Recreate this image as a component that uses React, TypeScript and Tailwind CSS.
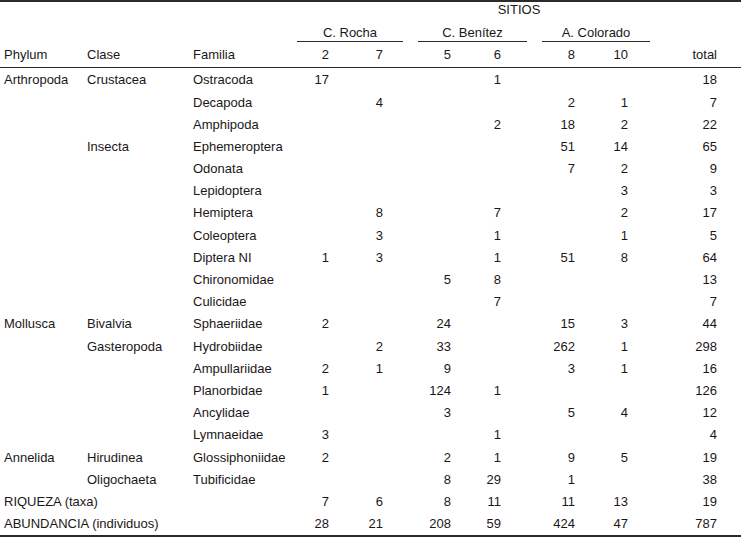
const COLS = "grid grid-cols-[83px_106px_96px_40px_54px_68px_50px_74px_53px_89px] pl-[4px]";

type Row = {
  phylum?: string;
  clase?: string;
  familia?: string;
  label?: string;
  v: (number | null)[];
  total: number;
};

const _ = null;

const ROWS: Row[] = [
  { phylum: "Arthropoda", clase: "Crustacea", familia: "Ostracoda", v: [17, _, _, 1, _, _], total: 18 },
  { familia: "Decapoda", v: [_, 4, _, _, 2, 1], total: 7 },
  { familia: "Amphipoda", v: [_, _, _, 2, 18, 2], total: 22 },
  { clase: "Insecta", familia: "Ephemeroptera", v: [_, _, _, _, 51, 14], total: 65 },
  { familia: "Odonata", v: [_, _, _, _, 7, 2], total: 9 },
  { familia: "Lepidoptera", v: [_, _, _, _, _, 3], total: 3 },
  { familia: "Hemiptera", v: [_, 8, _, 7, _, 2], total: 17 },
  { familia: "Coleoptera", v: [_, 3, _, 1, _, 1], total: 5 },
  { familia: "Diptera NI", v: [1, 3, _, 1, 51, 8], total: 64 },
  { familia: "Chironomidae", v: [_, _, 5, 8, _, _], total: 13 },
  { familia: "Culicidae", v: [_, _, _, 7, _, _], total: 7 },
  { phylum: "Mollusca", clase: "Bivalvia", familia: "Sphaeriidae", v: [2, _, 24, _, 15, 3], total: 44 },
  { clase: "Gasteropoda", familia: "Hydrobiidae", v: [_, 2, 33, _, 262, 1], total: 298 },
  { familia: "Ampullariidae", v: [2, 1, 9, _, 3, 1], total: 16 },
  { familia: "Planorbidae", v: [1, _, 124, 1, _, _], total: 126 },
  { familia: "Ancylidae", v: [_, _, 3, _, 5, 4], total: 12 },
  { familia: "Lymnaeidae", v: [3, _, _, 1, _, _], total: 4 },
  { phylum: "Annelida", clase: "Hirudinea", familia: "Glossiphoniidae", v: [2, _, 2, 1, 9, 5], total: 19 },
  { clase: "Oligochaeta", familia: "Tubificidae", v: [_, _, 8, 29, 1, _], total: 38 },
  { label: "RIQUEZA (taxa)", v: [7, 6, 8, 11, 11, 13], total: 19 },
  { label: "ABUNDANCIA (individuos)", v: [28, 21, 208, 59, 424, 47], total: 787 },
];

export default function App() {
  return (
    <div className="w-[741px] h-[540px] bg-white text-[#1a1718] text-[13px] font-['Liberation_Sans',Arial,sans-serif]">
      <div className="border-t-2 border-[#2b2b2b]">
        {/* SITIOS */}
        <div className="flex h-[15px] pl-[297px]">
          <div className="flex-1 text-center leading-[15px]">SITIOS</div>
        </div>

        {/* site groups */}
        <div className="flex h-[25px] pl-[297px] gap-[15px]">
          {[
            ["C. Rocha", "w-[106px]"],
            ["C. Benítez", "w-[109px]"],
            ["A. Colorado", "w-[108px]"],
          ].map(([name, w]) => (
            <div key={name} className={`${w} flex items-end justify-center border-b border-[#2b2b2b]`}>
              <span className="leading-[16px]">{name}</span>
            </div>
          ))}
        </div>

        {/* column headers */}
        <div className={`${COLS} h-[26px] items-center border-b border-[#2b2b2b]`}>
          <div>Phylum</div>
          <div>Clase</div>
          <div>Familia</div>
          {["2", "7", "5", "6", "8", "10", "total"].map((h) => (
            <div key={h} className="text-right">{h}</div>
          ))}
        </div>

        {/* body */}
        <div className="pt-[1px] border-b-2 border-[#2b2b2b]">
          {ROWS.map((r, i) => (
            <div key={i} className={`${COLS} h-[22.2px] items-center`}>
              {r.label ? (
                <div className="col-span-3 whitespace-nowrap">{r.label}</div>
              ) : (
                <>
                  <div>{r.phylum}</div>
                  <div>{r.clase}</div>
                  <div className="whitespace-nowrap">{r.familia}</div>
                </>
              )}
              {r.v.map((n, j) => (
                <div key={j} className="text-right">{n ?? ""}</div>
              ))}
              <div className="text-right">{r.total}</div>
            </div>
          ))}
        </div>
      </div>
    </div>
  );
}
